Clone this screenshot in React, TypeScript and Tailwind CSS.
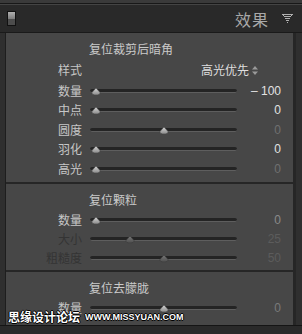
import React from "react";

const Thumb = ({ dim }: { dim?: boolean }) => (
  <svg width="10" height="8" viewBox="0 0 10 8">
    <defs>
      <linearGradient id={dim ? "tgd" : "tg"} x1="0" y1="0" x2="0" y2="1">
        <stop offset="0" stopColor={dim ? "#7a7a7a" : "#d8d8d8"} />
        <stop offset="1" stopColor={dim ? "#4e4e4e" : "#8a8a8a"} />
      </linearGradient>
    </defs>
    <path
      d="M5 0.5 L9 5 Q9.2 7.6 5 7.6 Q0.8 7.6 1 5 Z"
      fill={`url(#${dim ? "tgd" : "tg"})`}
      stroke={dim ? "#3a3a3a" : "#4a4a4a"}
      strokeWidth="0.6"
    />
  </svg>
);

const Slider = ({ pct, dim, hideThumb }: { pct: number; dim?: boolean; hideThumb?: boolean }) => (
  <div className="relative w-[147px] h-full flex items-center">
    <div className="w-full h-[4px] rounded-full bg-[#242424] border-b border-[#5e5e5e]" />
    {!hideThumb && (
      <div
        className="absolute top-1/2 -translate-y-[45%] -translate-x-1/2 flex"
        style={{ left: `${6 + pct * 1.36}px` }}
      >
        <Thumb dim={dim} />
      </div>
    )}
  </div>
);

type RowProps = {
  label: string;
  labelCls?: string;
  pct: number;
  value: string;
  valueCls: string;
  dim?: boolean;
  h: string;
};

const Row = ({ label, labelCls, pct, value, valueCls, dim, h }: RowProps) => (
  <div className={`flex items-center ${h}`}>
    <div className={`w-[76px] text-right text-[12px] leading-none ${labelCls ?? "text-[#c6c6c6]"}`}>{label}</div>
    <div className="ml-[8px] h-full">
      <Slider pct={pct} dim={dim} />
    </div>
    <div className={`w-[44px] text-right text-[12px] leading-none font-['Liberation_Sans',sans-serif] ${valueCls}`}>{value}</div>
  </div>
);

const Title = ({ text }: { text: string }) => (
  <div className="h-[20px] flex items-center pl-[83px] text-[12px] leading-none text-[#cacaca]">{text}</div>
);

export default function App() {
  return (
    <div className="relative w-[302px] h-[334px] overflow-hidden bg-[#2f2f2f] font-['Noto_Sans_CJK_SC',sans-serif]">
      {/* top strip */}
      <div className="h-[4px] bg-[#3a3a3a] border-b border-[#181818]" />
      {/* header */}
      <div className="h-[29px] bg-[#292929] border-b border-[#1a1a1a] flex items-center border-t border-t-[#444]">
        <div className="ml-[7px] w-[9px] h-[15px] border border-[#111] flex flex-col">
          <div className="h-1/2 bg-gradient-to-b from-[#b0b0b0] to-[#7c7c7c]" />
          <div className="h-1/2 bg-[#4c4c4c]" />
        </div>
        <div className="ml-auto text-[16px] leading-none text-[#a8a8a8] tracking-[1px]">效果</div>
        <svg className="ml-[13px] mr-[9px]" width="11" height="9" viewBox="0 0 11 9">
          <g fill="#b0b0b0">
            <rect x="0" y="0" width="11" height="1" />
            <rect x="2" y="2" width="7" height="1" />
            <rect x="3" y="4" width="5" height="1" />
            <rect x="4" y="6" width="3" height="1" />
            <rect x="5" y="8" width="1" height="1" />
            <rect x="1" y="1" width="1" height="1" />
            <rect x="9" y="1" width="1" height="1" />
          </g>
        </svg>
      </div>
      {/* body */}
      <div className="ml-[5px] mr-[6px] h-[292px] bg-[#474747] border-l border-[#1e1e1e] border-r-[3px] border-r-[#262626] flex flex-col">
        {/* section 1 */}
        <div className="h-[149px] pt-[6px]">
          <Title text="复位裁剪后暗角" />
          <div className="flex items-center h-[22px]">
            <div className="w-[76px] text-right text-[12px] leading-none text-[#c6c6c6]">样式</div>
            <div className="w-[176px] flex items-center justify-end text-[12px] leading-none text-[#dedede]">
              高光优先
              <svg className="ml-[3px]" width="6" height="9" viewBox="0 0 6 9">
                <path d="M3 0 L6 3.5 L0 3.5 Z" fill="#9a9a9a" />
                <path d="M0 5.5 L6 5.5 L3 9 Z" fill="#9a9a9a" />
              </svg>
            </div>
          </div>
          <Row h="h-[19.5px]" label="数量" pct={0} value="– 100" valueCls="text-[#e2e2e2]" />
          <Row h="h-[19.5px]" label="中点" pct={0} value="0" valueCls="text-[#e2e2e2]" />
          <Row h="h-[19.5px]" label="圆度" pct={50} value="0" valueCls="text-[#707070]" />
          <Row h="h-[19.5px]" label="羽化" pct={0} value="0" valueCls="text-[#e2e2e2]" />
          <Row h="h-[19.5px]" label="高光" pct={0} value="0" valueCls="text-[#707070]" />
        </div>
        <div className="h-[2px] bg-[#262626]" />
        {/* section 2 */}
        <div className="h-[86px] pt-[6px]">
          <Title text="复位颗粒" />
          <Row h="h-[19px]" label="数量" pct={0} value="0" valueCls="text-[#8a8a8a]" />
          <Row h="h-[19px]" label="大小" labelCls="text-[#343434]" pct={25} dim value="25" valueCls="text-[#5c5c5c]" />
          <Row h="h-[19px]" label="粗糙度" labelCls="text-[#343434]" pct={50} dim value="50" valueCls="text-[#5c5c5c]" />
        </div>
        <div className="h-[2px] bg-[#262626]" />
        {/* section 3 */}
        <div className="flex-1 pt-[6px]">
          <Title text="复位去朦胧" />
          <Row h="h-[19px]" label="数量" pct={50} value="0" valueCls="text-[#7a7a7a]" />
        </div>
      </div>
      <div className="h-[9px] bg-[#2a2a2a] border-t border-[#151515]" />
      {/* watermark */}
      <div className="absolute left-[8px] top-[311px] flex items-center gap-[5px]">
        <span className="text-[12px] font-bold leading-none text-white [text-shadow:1px_0_0_#000,-1px_0_0_#000,0_1px_0_#000,0_-1px_0_#000]">思缘设计论坛</span>
        <span className="text-[9px] font-bold leading-none text-white font-['Liberation_Sans',sans-serif] [text-shadow:1px_0_0_#000,-1px_0_0_#000,0_1px_0_#000,0_-1px_0_#000]">WWW.MISSYUAN.COM</span>
      </div>
    </div>
  );
}
